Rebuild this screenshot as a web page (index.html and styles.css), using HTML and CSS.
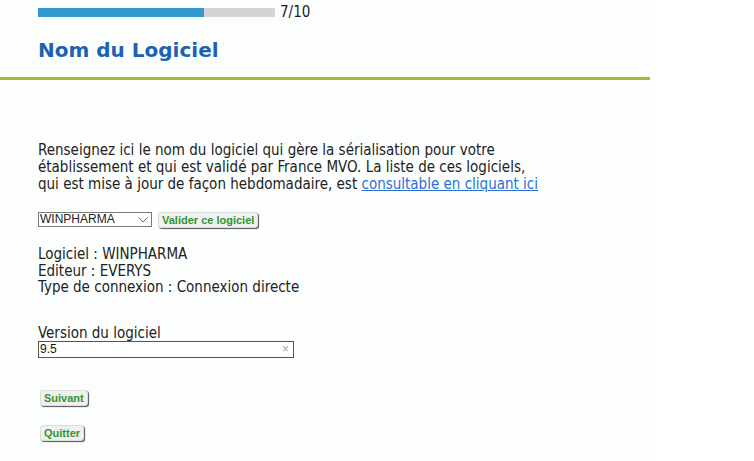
FILE: index.html
```html
<!DOCTYPE html>
<html lang="fr">
<head>
<meta charset="utf-8">
<title>Nom du Logiciel</title>
<link rel="stylesheet" href="styles.css">
</head>
<body>
<div class="page">
  <div class="progress">
    <div class="bar"><div class="fill" style="width:70%"></div></div>
    <span class="count">7/10</span>
  </div>
  <h1 class="title">Nom du Logiciel</h1>
  <div class="rule"></div>

  <p class="intro">Renseignez ici le nom du logiciel qui gère la sérialisation pour votre<br>établissement et qui est validé par France MVO. La liste de ces logiciels,<br>qui est mise à jour de façon hebdomadaire, est <a href="#" class="link">consultable en cliquant ici</a></p>

  <div class="choose">
    <span class="select-wrap">
      <select class="select"><option>WINPHARMA</option></select>
      <svg class="chev" width="10" height="6" viewBox="0 0 10 6"><path d="M0.5 0.5 L5 5 L9.5 0.5" fill="none" stroke="#666" stroke-width="1"/></svg>
    </span>
    <button class="btn">Valider ce logiciel</button>
  </div>

  <div class="info">
    <div>Logiciel : WINPHARMA</div>
    <div>Editeur : EVERYS</div>
    <div>Type de connexion : Connexion directe</div>
  </div>

  <label class="label" for="ver">Version du logiciel</label>
  <span class="input-wrap">
    <input id="ver" class="input" type="text" value="9.5">
    <span class="clear">×</span>
  </span>

  <div class="actions">
    <button class="btn">Suivant</button>
    <button class="btn">Quitter</button>
  </div>
</div>
</body>
</html>
```

FILE: styles.css
```css
html, body {
  margin: 0;
  padding: 0;
  background: #ffffff;
}
.page {
  width: 650px;
  min-height: 461px;
  background: #fcfefe;
  font-family: "DejaVu Sans Condensed", "DejaVu Sans", sans-serif;
  font-size: 15px;
  color: #222;
}
.progress {
  display: flex;
  align-items: center;
  gap: 5px;
  padding: 4px 0 0 38px;
  height: 17px;
}
.bar {
  width: 237px;
  height: 9px;
  background: #d4d4d4;
}
.fill {
  height: 100%;
  background: #3399cc;
}
.count {
  font-size: 15px;
  color: #222;
  line-height: 17px;
}
.title {
  margin: 17px 0 0 38px;
  font-family: "DejaVu Sans", sans-serif;
  font-size: 20px;
  line-height: 24px;
  font-weight: bold;
  color: #1d62b2;
}
.rule {
  margin-top: 15px;
  height: 3px;
  background: #9bbf2e;
}
.intro {
  margin: 62px 0 0 38px;
  line-height: 17px;
}
.link {
  color: #2b70d8;
  text-decoration: underline;
}
.choose {
  display: flex;
  align-items: center;
  gap: 6px;
  margin: 18px 0 0 38px;
  height: 17px;
}
.select-wrap {
  position: relative;
  display: inline-block;
}
.select {
  appearance: none;
  -webkit-appearance: none;
  width: 114px;
  height: 15px;
  border: 1px solid #7a7a7a;
  border-radius: 0;
  background: #fff;
  font-family: "Liberation Sans", Arial, sans-serif;
  font-size: 12px;
  line-height: 13px;
  color: #222;
  padding: 0 0 0 1px;
  margin: 0;
  display: block;
}
.chev {
  position: absolute;
  right: 4px;
  top: 5px;
}
.btn {
  font-family: "Liberation Sans", Arial, sans-serif;
  font-size: 11px;
  font-weight: bold;
  color: #2f962f;
  background: #f0f0f0;
  border: 1px solid #dcdcdc;
  border-radius: 3px;
  box-shadow: 1px 1px 1px #555;
  padding: 0 3px;
  height: 16px;
  line-height: 14px;
  margin: 0;
}
.info {
  margin: 18px 0 0 38px;
  line-height: 16.5px;
}
.label {
  display: block;
  margin: 29px 0 0 38px;
  line-height: 17px;
}
.input-wrap {
  position: relative;
  display: block;
  width: 256px;
  margin: -1px 0 0 38px;
}
.input {
  display: block;
  box-sizing: border-box;
  width: 256px;
  height: 17px;
  border: 1px solid #555;
  border-radius: 0;
  padding: 0 1px;
  margin: 0;
  font-family: "Liberation Sans", Arial, sans-serif;
  font-size: 12px;
  color: #111;
  background: #fff;
}
.clear {
  position: absolute;
  right: 5px;
  top: 1px;
  font-family: "Liberation Sans", Arial, sans-serif;
  font-size: 12px;
  line-height: 15px;
  color: #9aa8b8;
}
.actions {
  display: flex;
  flex-direction: column;
  align-items: flex-start;
  gap: 19px;
  margin: 32px 0 0 40px;
}
```
